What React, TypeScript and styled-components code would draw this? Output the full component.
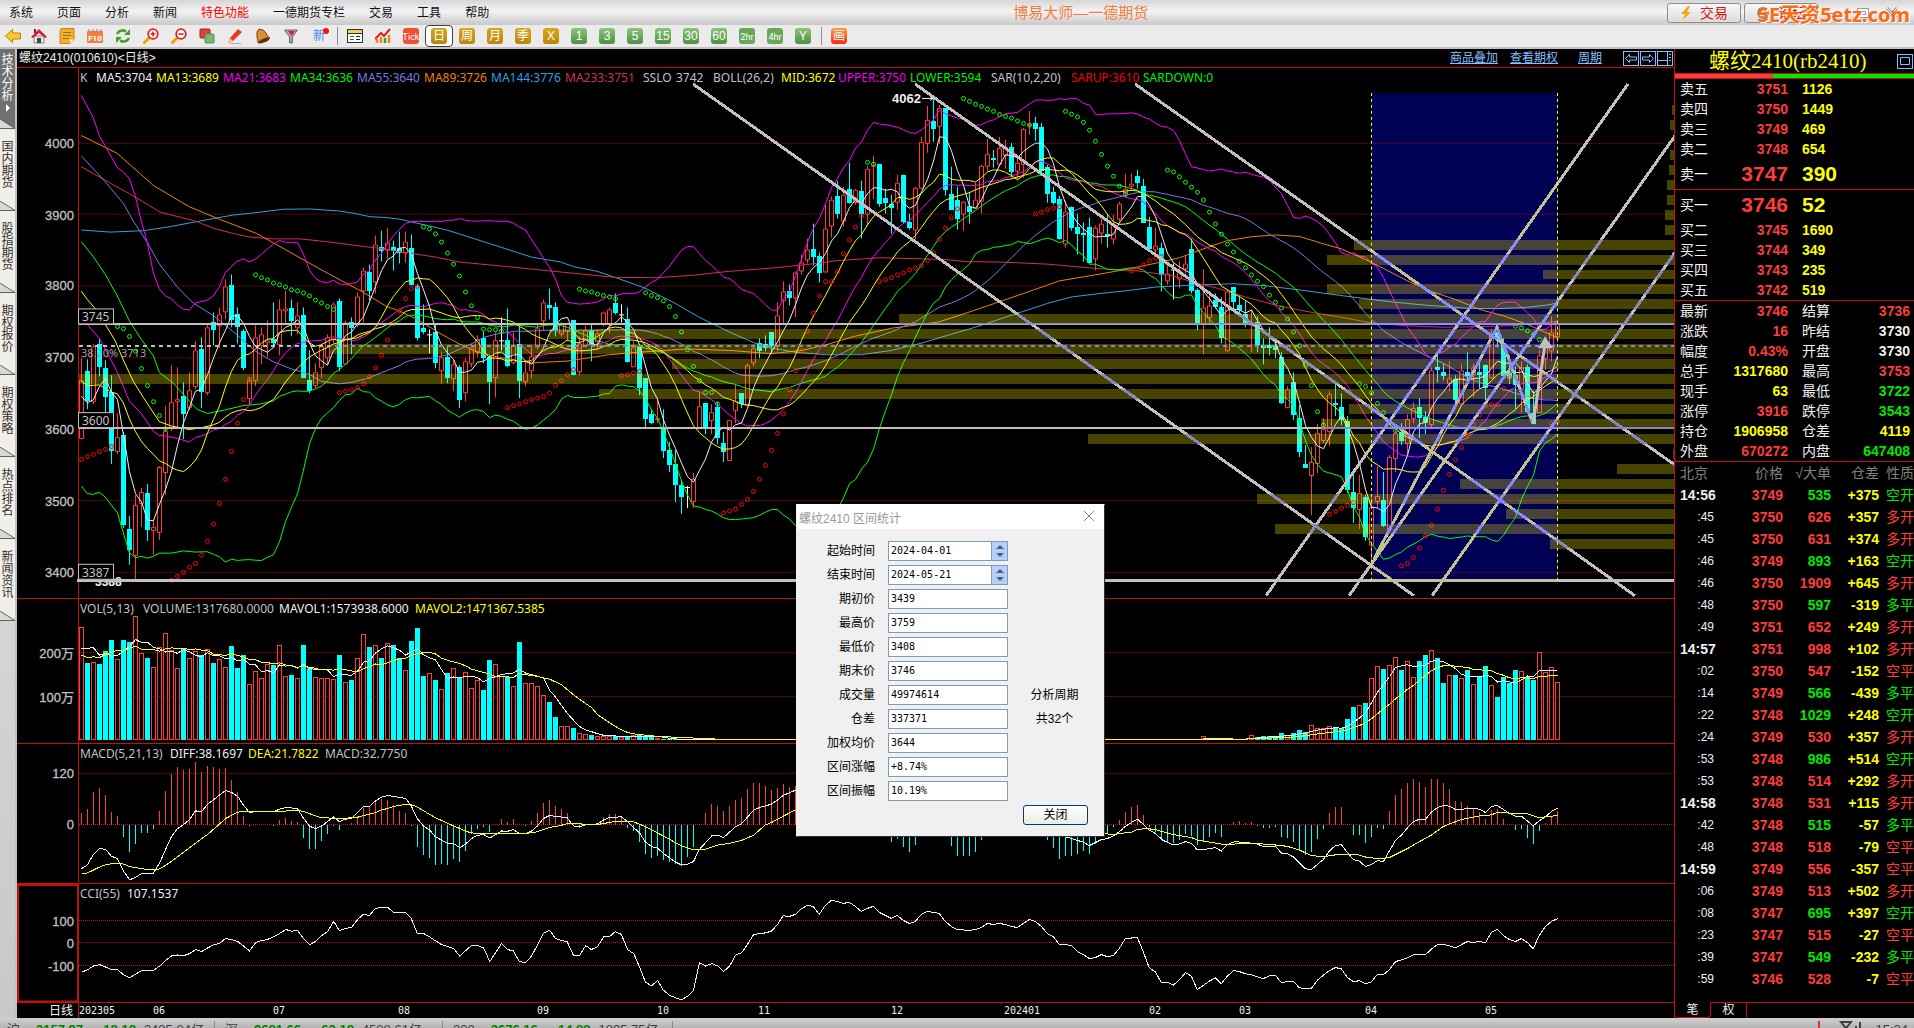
import React from 'react';
import styled, { createGlobalStyle } from 'styled-components';

const CJK = '"Noto Sans CJK SC"';
const UI = `"Liberation Sans", ${CJK}, sans-serif`;
const TAHOMA = `"Noto Sans", ${CJK}, sans-serif`;
const FIXED = `"DejaVu Sans Mono", ${CJK}, monospace`;

const C = {
  line: '#c01010',
  grid: '#900808',
  up: '#ff3c3c',
  down: '#00ffff',
  green: '#00e800',
  yellow: '#ffff00',
  silver: '#c0c0c0',
  white: '#f0f0f0',
  link: '#80c0ff',
};

/* ---------- market data ---------- */

type Candle = { kind: string; high: number; top: number; bottom: number; low: number };
type Window = { x0: number; kx: number; dy: number };
type Point = [number, number];

const W1: Window = { x0: 0, kx: 3, dy: -28 };
const W2: Window = { x0: 400, kx: 2.613, dy: 0 };
const W3: Window = { x0: 1000, kx: 2.306, dy: 0 };

const barX = (i: number) => 81.5 + i * 6;
const priceY = (v: number) => 60 + v / 2.8;

const readCandles = (src: string, dy: number): Candle[] =>
  src.trim().split(/[;\n]+/).map((s) => s.trim()).filter(Boolean).map((s) => {
    const [high, top, bottom, low] = s.slice(1).split(' ').map((n) => Number(n) + dy);
    return { kind: s[0], high, top, bottom, low };
  });

const candles: Candle[] = [
  ...readCandles(`
r865 928 1090 1090;c868 902 985 1008;r826 832 985 993;c810 826 889 915;c870 894 973 1018;c912 960 1125 1162
r1018 1087 1125 1133;c1072 1082 1332 1340;c1308 1345 1402 1445;r1248 1278 1418 1488;r1230 1241 1272 1337
c1217 1243 1346 1377;r1318 1337 1346 1417;r1168 1171 1353 1374;r1000 1070 1185 1248;r885 987 1062 1070
r890 981 986 1060;c932 972 1021 1091;r904 956 1003 1010;r818 842 944 952;c806 840 960 1004;r770 779 959 968
c736 765 786 828;r722 743 774 837;r645 664 734 756;c630 661 759 778;c721 742 777 822;c783 790 892 898
r918 928 976 995;r772 807 928 943;r779 799 828 881;r758 816 820 863;c708 812 822 838;r700 729 827 857
r676 726 730 770;c700 725 762 803;r708 746 779 797;c722 744 920 922;c843 927 958 963;r880 905 942 950
r826 832 891 920;r798 807 862 883;r708 715 812 822;c697 706 889 902;r760 765 880 883;c750 765 781 853
r680 692 770 779;r610 618 676 763;c602 622 677 702;r520 547 649 682;c506 552 563 593;r497 539 561 585
c535 552 562 618;c510 555 568 600`, -28),
  ...readCandles(`
r482 510 540 567;c490 526 633 633;c630 636 780 786;c685 753 763 770;w755 771 771 823;c738 763 850 865
r820 835 872 910;c805 833 892 907;r840 853 893 930;c857 862 954 976;r838 846 933 957;r795 806 852 862
r773 783 818 835;c762 782 836 850;c826 833 903 965;r765 788 891 945;w722 788 789 815;c697 786 859 862
r765 800 848 853;c745 798 901 950;r848 877 901 915;r800 832 872 892;r739 753 803 812;r672 679 730 760
c641 688 696 728;c680 694 759 775;r735 740 766 775;r738 740 760 790;c731 732 884 886;r775 795 874 885
r745 758 802 805;c742 759 800 845;r755 768 790 812;r706 709 738 748;r694 701 740 768;c655 684 711 713
w687 714 714 735;c694 728 848 848;r790 806 860 860;c798 806 920 940;c893 893 1007 1030;c980 993 1020 1022
r950 1006 1009 1020;c980 1032 1097 1117;c1072 1095 1136 1155;c1095 1134 1192 1240;c1178 1192 1225 1273
w1196 1197 1197 1257;r1160 1175 1237 1258;r932 971 1032 1032;c963 963 1032 1050;r965 989 1012 1050
c960 974 1060 1078;c1045 1076 1100 1128;r1012 1012 1124 1126;r910 957 984 1018;c935 936 965 977
r852 858 968 970;r798 810 847 860;c782 795 817 837;c773 799 808 818;c765 765 803 825;r680 718 802 817
r622 650 674 740;c630 650 668 688;r594 595 667 722;r545 569 592 602;r500 531 561 570;c460 529 551 578
c540 549 595 623;r407 472 594 595;r383 391 464 497;c340 381 430 445;r355 378 452 468;c288 360 400 403
r360 365 397 405;c340 368 430 500;r297 306 430 465;r270 293 296 390;c290 292 402 412;c362 386 399 432
c378 404 414 488;r322 343 398 420;c322 322 454 460;c430 454 470 475;r356 357 475 505;r215 230 358 360
r130 168 233 260;c107 170 192 230;r127 133 186 235;c133 133 363 380;c300 375 420 420;c355 393 444 475
r395 398 432 480;c370 409 426 458;r345 392 413 415;r294 297 394 430;r222 264 298 310;c252 275 279 302
r215 245 290 300`, 0),
  ...readCandles(`
r225 243 265 305;c232 243 313 330;r270 289 312 335;r190 194 290 330;r143 180 182 210;c160 176 192 228
c176 188 310 320;c295 300 374 400;c355 370 400 405;c380 388 500 503;r395 425 516 525;c412 412 470 478
c430 468 487 545;c455 484 490 565;c442 468 567 567;r465 470 558 592;r445 460 485 515;c432 486 490 525
r435 458 500 517;r397 404 446 453;r318 362 372 385;r320 348 354 365;c308 325 343 360;c332 353 456 456
c440 467 530 535;r470 522 533 550;c512 525 603 650;r570 600 620 630;w570 588 588 672;r565 590 614 640
r550 572 584 598;c500 529 650 655;c640 647 741 760;r588 694 740 825;r655 690 723 740;c655 674 694 697
c665 694 780 795;r645 650 816 817;c637 637 680 705;c660 690 702 720;c675 713 740 750;r700 735 742 820
c720 735 802 820;c780 802 810 853;c750 800 808 828;c785 803 815 838;c820 835 963 965;r915 925 975 977
c875 905 997 1012;c970 1005 1100 1113;c1080 1134 1144 1145;r1085 1128 1166 1276;r1022 1047 1130 1160
r1005 1035 1068 1075;r930 937 1042 1083;c912 963 969 1000;c935 975 1012 1025;c1000 1014 1208 1215
c1155 1211 1256 1298;r1165 1216 1260 1315;c1222 1225 1337 1350;r1230 1255 1360 1415;r1140 1224 1238 1258
c1155 1235 1308 1310;r1110 1114 1315 1318;r1040 1047 1118 1155;c1020 1043 1070 1080;r995 1008 1076 1110
r960 978 1006 1020;c950 975 1005 1062;c985 1003 1020 1050;r862 872 1022 1030;c825 862 872 905
c850 875 887 900;r845 893 907 930;c885 895 955 970;r855 872 963 965;c820 875 888 910;r852 862 882 945
c850 875 886 920;c855 858 922 955;r755 768 890 892;c752 765 788 805;c780 795 887 890;c830 880 892 910
c860 885 912 980;r845 862 920 990;c855 862 988 990;c930 990 1022 1022;r815 830 987 990;r785 800 838 870
r720 765 815 845;r735 740 775 785`, 0),
];

const closes = candles.map((c) => (c.kind === 'c' ? c.bottom : c.top));

const points = (src: string): Point[] =>
  src.trim().split(/\s+/).map((p) => p.split(',').map(Number) as Point);

const trace = (w: Window, src: string): Point[] =>
  points(src).map(([x, y]) => [w.x0 + x / w.kx, priceY(y + w.dy)]);

const mean = (a: number[]) => a.reduce((s, n) => s + n, 0) / a.length;

const average = (n: number, spread = 0): Point[] =>
  closes.flatMap((_, i): Point[] => {
    if (i < n - 1) return [];
    const part = closes.slice(i - n + 1, i + 1);
    const m = mean(part);
    const sd = Math.sqrt(mean(part.map((v) => (v - m) ** 2)));
    return [[barX(i), priceY(m + spread * sd)]];
  });

const curves: [string, Point[]][] = [
  ['#30a0e0', [
    ...trace(W1, '244,505 330,511 430,507 514,495 600,480 700,463 780,455 850,447 930,446 1020,452 1072,460 1110,468 1160,470'),
    ...trace(W2, '0,447 61,462 125,478 233,515 343,553 420,567 453,580 515,593 562,610 640,640 719,683 782,722 860,763 923,793 970,808 1033,820 1111,827 1206,827 1284,815 1362,795 1440,770 1503,750'),
    ...trace(W3, '0,727 55,705 110,683 165,665 234,655 289,648 360,637 441,632 538,628 607,633 690,645 760,657 857,672 912,680 981,688 1078,697 1147,698 1216,694 1260,688 1286,682'),
  ]],
  ['#d03050', [
    ...trace(W1, '244,328 334,375 410,415 480,455 586,480 640,500 700,515 750,525 820,530 900,530 980,538 1080,550 1140,557'),
    ...trace(W2, '0,538 93,553 155,567 280,580 374,590 468,600 562,610 672,611 767,604 860,593 970,584 1064,574 1143,563 1253,555 1362,558 1425,560 1480,566'),
    ...trace(W3, '0,567 110,573 220,585 317,592 400,606 440,622 500,640 566,665 635,688 704,705 787,722 857,738 940,746 1023,750 1120,748 1190,745 1244,738 1286,733'),
  ]],
  ['#f08000', [
    ...trace(W1, '244,240 352,290 460,380 568,440 658,475 770,515 856,560 970,620 1090,680 1160,720'),
    ...trace(W2, '0,705 45,728 109,770 155,797 202,820 260,835 343,850 437,845 547,827 625,820 750,811 860,815 970,824 1050,815 1111,800 1190,775 1284,753 1409,735 1480,710'),
    ...trace(W3, '0,678 55,655 137,620 234,600 303,585 360,570 414,555 469,530 524,507 580,496 635,491 690,495 746,516 787,530 843,560 884,585 940,620 995,650 1050,672 1106,700 1161,718 1216,742 1286,780'),
  ]],
  ['#7878e8', [
    ...trace(W1, '244,297 316,370 370,430 400,480 442,540 478,600 532,665 580,710 640,745 712,800 766,845 820,875 874,895 928,910 964,930 1018,937 1054,933 1100,922 1160,900 1200,885'),
    ...average(55),
  ]],
  ['#00ff00', [
    ...trace(W1, '244,538 280,580 316,630 352,690 388,760 424,812 460,858 478,905 520,935 568,985 590,1008 622,1020 676,1010 730,998 784,993 820,985'),
    ...average(34),
  ]],
  ['#00ff00', [
    ...trace(W1, '244,1224 262,1245 280,1247 298,1241 316,1255 334,1277 352,1298 370,1355 388,1410 406,1425 424,1421 442,1426 460,1421 478,1412 514,1412 550,1406 586,1409 622,1408 640,1415 658,1422 676,1437'),
    ...average(26, 2),
  ]],
  ['#ff00ff', [
    ...trace(W1, '262,770 300,812 350,900 388,985 424,1020 460,1070 478,1082 496,1083 532,1090 568,1100 586,1088'),
    ...average(21),
  ]],
  ['#ff00ff', [
    ...trace(W1, '244,127 280,190 298,240 316,270 334,300 352,330 370,342 388,360 406,410 424,480 442,540 460,625 478,670 496,690 514,698 532,715 550,727 568,730 586,710 622,702 640,690 658,665 676,625'),
    ...average(26, -2),
  ]],
  ['#ffff00', [
    ...trace(W1, '244,677 262,700 285,725 316,770 345,815 370,870 400,930 430,975 478,1043 514,1055 568,1065 604,1060 640,1052 658,1045 676,1030'),
    ...average(26),
  ]],
  ['#ffff00', [
    ...trace(W1, '244,930 262,942 298,940 334,960 352,965 370,990 388,1035 406,1070 424,1098 442,1118'),
    ...average(13),
  ]],
  ['#f0f0f0', [...trace(W1, '244,972 262,990 280,982 298,945'), ...average(5)]],
];

const sar: [number, string, string][] = [
  [0, 'up', '1121,1113,1107,1099,1093,1085'],
  [6, 'dn', '748,754,776,817,866,914,959,998,1035'],
  [15, 'up', '1460,1449,1438,1424,1413,1390,1351,1303,1245,1177,1099,1020,953,896'],
  [29, 'dn', '603,611,617,626,631,637,645,648,654,662,674,682,692,700'],
  [43, 'up', '934,930,926,920,909,889,864,828,786,740,704,670,642,635'],
  [57, 'dn', '468,474,488,511,542,573,606,651,690,723,755,757,757,761'],
  [71, 'up', '976,970,965,959,954,949,945,935,913,900,883,869'],
  [83, 'dn', '643,648,651,657,661,665,670'],
  [90, 'up', '886,883,878,874'],
  [94, 'dn', '653,661,667,676,692,720,763,813,860,900,933,933,965'],
  [107, 'up', '1272,1266,1261,1247,1233,1211,1177,1138,1096,1048,993,925,872,816,760,710,662,622,622,595,544,505,469,438'],
  [131, 'dn', '287,292'],
  [133, 'up', '622,617,611,603,598,589,584,577,563,540,503,472,443,418'],
  [147, 'dn', '108,116,124,130,138,144,153,158,163,171,178,183'],
  [159, 'up', '432,427,420,416,412'],
  [164, 'dn', '144,152,160,175,197,228,265,298,326,354,377'],
  [175, 'up', '592,586,575,563,557,552'],
  [181, 'dn', '309,314,328,343,357,371,393,427,460,489,517,539,565,583,603,621,636,660,680,696,727,763,802,857,914,987,1025'],
  [208, 'up', '1275,1267,1258,1250,1242'],
  [213, 'dn', '909,916,934,964,990,1018,1040'],
  [220, 'up', '1420,1413,1396,1370,1336,1306,1261,1208,1163,1122,1088,1053,1024,996,970,967,967,922,892'],
  [239, 'dn', '747,752,760,770,785'],
  [245, 'up', '1020,1015'],
];

// left edge of every volume-at-price bar, from the top level down
const profile = [1672, 1670, 1674, 1670, 1669, 1667, 1667, 1665, 1665, 1354, 1327, 1543, 1327, 1359, 899, 549, 330, 672, 79, 599, 1349, 1321, 1088, 1673, 1617, 1460, 1257, 1506, 1275, 1550];

const volTops = (
  '115 222 220 225 186 153 211 153 159 82 193 207 235 175 133 182 238 180 208 187 198 181 222 211 235 171 237 198 286 245 268 226 228 169 262 258 268 168 240 265 268 268 271 198 280 273 208 136 174 169 207 163 168 208 244 156 117 261 253 273 301 252 238 265 250 298 274 303 213 226 262 265 290 159 283 283 290 319 339 384 412 411 417 433 436 438 441 440 440 440 445 443 438 436 441 443 447 '
  + '451 '.repeat(89)
  + '449 442 449 449 449 449 449 449 449 438 444 441 441 444 432 438 432 423 430 408 418 418 412 418 418 390 354 349 342 267 232 240 229 205 243 217 265 216 198 184 208 282 259 258 268 243 286 262 231 289 324 265 282 243 247 265 273 190 250 235 280'
).split(' ').map(Number);

const volAverage = (n: number, head: number[]): Point[] =>
  volTops.map((_, i) => [
    barX(i),
    i < n - 1 ? head[Math.min(i, head.length - 1)] : mean(volTops.slice(i - n + 1, i + 1)),
  ]).map(([x, y]) => [x, 590 + y / 3]);

const macdBars = (
  '672 660 608 597 618 669 682 743 789 765 732 732 720 666 606 555 534 543 540 519 549 531 534 540 537 573 609 680 711 707 707 707 711 692 687 696 699 747 780 780 756 735 711 723 709 702 680 656 652 633 630 633 648 666 672 711 774 797 807 827 825 827 810 818 786 735 720 714 729 708 690 699 690 708 711 696 672 642 633 651 660 672 711 717 708 706 703 684 675 675 684 717 726 760 794 806 800 812 819 825 825 804 774 704 672 645 652 666 651 633 627 600 582 582 591 603 597 585 594 591 '
  + '600 606 612 620 628 636 644 652 660 670 680 690 700 704 715 758 750 774 789 768 730 715 712 720 735 770 801 801 801 789 753 720 700 690 680 684 690 700 708 715 735 753 777 810 801 801 795 786 795 765 745 735 714 693 669 654 648 678 713 728 753 760 762 753 735 741 768 758 744 732 744 708 699 696 702 699 711 717 717 714 744 747 759 786 798 789 750 720 672 654 654 706 738 738 762 744 717 720 666 618 600 582 570 579 594 570 570 582 600 636 639 651 660 669 690 663 660 690 708 723 720 747 765 726 702 684 666'
).split(' ').map(Number);

const low = (x0: number, kx: number, src: string): Point[] =>
  points(src).map(([x, y]) => [x0 + x / kx, 590 + y / 3]);

const diff: Point[] = [
  ...low(0, 1.96, '160,838 171,827 183,795 195,778 207,780 218,800 230,808 242,845 254,871 266,864 277,853 300,852 313,820 336,742 348,718 360,706 372,690 383,665 395,667 407,645 430,618 442,604 454,610 466,622 477,648 489,670 501,667 536,667 548,660 560,655 583,658 595,688 607,711 618,718 630,711 654,683 665,697 677,690 689,688 701,670 712,653 724,652 736,635 748,624 760,619 771,622 795,628 806,650 818,688 830,710 842,722 853,742 877,762 889,763 901,775 912,765 924,748 936,738 948,736 960,746 983,725 995,726 1006,721 1018,733 1030,733 1042,725 1053,711 1065,688 1077,679 1112,686 1124,710 1136,713 1148,706 1171,704 1183,692 1195,684 1218,683 1230,697 1242,715 1254,732 1265,758 1277,772 1289,777 1300,792 1324,818 1336,827 1348,824 1359,817 1371,780 1395,740 1407,738 1418,745 1442,712 1454,703 1465,684 1477,663 1489,655 1512,645 1524,632 1536,618 1558,604'),
  ...low(780, 3, '200,600 500,680 700,690 850,740 890,753 910,758 928,769 946,760 964,751 982,748 1000,740 1027,721'),
  ...low(1100, 2.703, '60,718 85,700 101,690 117,705 133,722 150,733 170,753 198,767 215,764 231,757 247,763 263,781 280,781 312,775 328,785 344,766 365,757 412,762 425,764 441,772 474,770 490,791 506,793 523,803 555,838 571,841 604,810 620,785 636,769 652,766 669,790 685,811 701,815 718,832 734,825 750,814 766,817 782,785 799,753 815,737 831,716 847,697 864,690 880,690 896,668 912,655 928,649 944,651 961,661 1009,658 1025,660 1042,670 1058,652 1074,649 1106,672 1123,681 1139,681 1155,695 1171,710 1187,695 1204,683 1220,667 1238,657'),
];

const dea: Point[] = [
  ...low(0, 1.96, '160,853 171,851 195,833 207,826 230,821 242,824 254,832 283,839 305,842 313,838 325,828 350,800 383,762 407,735 430,705 442,688 466,669 477,667 548,667 583,663 595,667 630,686 677,687 701,684 724,675 736,670 748,662 760,658 771,652 795,646 806,646 818,654 853,685 877,702 889,710 912,725 924,731 971,733 1042,731 1054,727 1077,715 1101,708 1112,703 1171,706 1206,697 1242,698 1265,712 1300,740 1336,770 1359,781 1371,781 1383,779 1407,767 1430,762 1454,753 1477,738 1500,707 1512,700 1536,680 1558,663'),
  ...low(1100, 2.703, '10,733 36,736 52,733 85,729 101,721 125,718 150,721 165,726 198,736 247,745 263,752 300,759 344,767 365,764 440,764 474,767 506,771 539,782 571,799 604,802 652,794 701,797 718,803 750,808 782,805 831,778 847,767 896,737 928,712 944,704 977,691 1025,680 1058,677 1074,670 1155,674 1187,685 1238,679'),
];

const cci: Point[] = [
  ...low(0, 1.96, '160,1145 171,1139 183,1127 195,1123 207,1130 218,1138 230,1138 242,1153 254,1162 277,1141 300,1141 313,1127 325,1110 336,1097 348,1094 360,1096 372,1090 383,1078 395,1084 407,1073 419,1063 430,1060 442,1045 454,1048 466,1054 477,1067 489,1082 501,1057 513,1051 524,1048 536,1040 548,1030 560,1018 571,1023 583,1021 595,1045 607,1063 618,1054 630,1037 642,1024 654,994 665,1021 677,1015 689,1012 701,988 712,973 724,976 736,955 748,952 760,952 771,967 795,967 806,985 818,1030 830,1030 842,1040 865,1063 889,1075 901,1097 924,1066 936,1066 948,1073 960,1114 983,1060 995,1078 1006,1082 1018,1114 1030,1117 1042,1097 1053,1066 1065,1030 1077,1020 1089,1045 1101,1051 1112,1055 1124,1096 1136,1096 1148,1066 1159,1078 1171,1070 1183,1040 1195,1039 1206,1024 1218,1033 1230,1078 1242,1090 1254,1132 1265,1175 1277,1186 1289,1171 1300,1199 1312,1214 1324,1222 1336,1228 1348,1217 1359,1200 1371,1117 1383,1127 1395,1120 1407,1127 1418,1144 1430,1127 1442,1094 1454,1087 1465,1063 1477,1033 1500,1028 1512,1023 1524,1003'),
  ...low(780, 3, '0,991 10,977 28,979 46,973 64,956 82,946 100,949 118,973 136,946 154,931 172,934 190,940 208,937 226,949 244,964 262,955 280,949 298,967 316,976 334,985 352,976 370,991 388,1000 406,994 424,973 442,964 478,970 496,994 514,1009 532,1018 568,1021 586,1018 604,1012 622,1000 640,1003 658,1000 676,1003 694,1009 712,1012 730,1000 748,988 766,994 784,1009 802,1030 820,1039 838,1063 856,1063 874,1066 892,1084 910,1093 928,1105 946,1102 964,1093 982,1099 1000,1096 1018,1075 1036,1045 1072,1042'),
  ...low(1100, 2.703, '101,1042 117,1085 133,1132 150,1145 166,1177 182,1175 198,1184 215,1168 231,1147 247,1157 263,1198 280,1184 296,1172 312,1162 328,1180 344,1157 361,1141 377,1144 393,1150 409,1153 441,1165 458,1156 474,1154 490,1177 506,1174 523,1174 539,1192 555,1195 571,1195 588,1169 604,1154 620,1141 636,1132 652,1135 669,1162 685,1174 701,1171 718,1180 734,1174 750,1151 766,1153 782,1138 799,1114 831,1103 847,1093 880,1093 896,1076 912,1063 928,1063 944,1066 961,1073 977,1063 993,1054 1009,1057 1025,1054 1042,1057 1058,1027 1074,1018 1090,1036 1106,1048 1123,1054 1139,1045 1155,1057 1171,1075 1187,1037 1204,1009 1220,994 1238,985'),
];

const asPath = (p: Point[]) => p.map(([x, y]) => `${x.toFixed(1)},${y.toFixed(1)}`).join(' ');

/* ---------- page frame ---------- */

const GlobalStyle = createGlobalStyle`
  * { box-sizing: border-box; }
  body { margin: 0; background: #c8c8c8; overflow: hidden; font-family: ${UI}; }
  button, input { font: inherit; margin: 0; padding: 0; border: 0; border-radius: 0; background: none; color: inherit; }
  table { border-collapse: collapse; border-spacing: 0; }
  td, th { padding: 0; font-weight: normal; text-align: left; }
`;

const Screen = styled.div`
  position: relative;
  display: flex;
  flex-direction: column;
  height: 100vh;
  overflow: hidden;
`;

const MenuBar = styled.nav`
  position: relative;
  display: flex;
  align-items: center;
  flex: none;
  height: 25px;
  padding-left: 9px;
  gap: 24px;
  background: linear-gradient(#d6d6d6, #f4f4f4 45%, #e4e4e4 65%, #c8c8c8);
  font-size: 12px;
  line-height: 24px;
`;

const MenuItem = styled.button<{ $hot?: boolean }>`
  color: ${(p) => (p.$hot ? '#ff0000' : '#101010')};
  white-space: nowrap;
`;

const Title = styled.h1`
  flex: 1;
  margin: 0 0 0 500px;
  color: #f47b3c;
  font-size: 15px;
  font-weight: normal;
`;

const TopButtons = styled.div`
  display: flex;
  align-items: center;
  gap: 3px;
  padding-right: 9px;
`;

const TradeButton = styled.button`
  display: flex;
  align-items: center;
  justify-content: center;
  gap: 8px;
  width: 74px;
  height: 20px;
  border: 1px solid #8c8c8c;
  border-radius: 3px;
  background: linear-gradient(#f8f8f8, #dcdcdc);
  color: #dc1414;
  font-size: 14px;
  line-height: 18px;
`;

const WindowButton = styled.button`
  width: 26px;
  height: 20px;
  color: #909090;
  svg { display: block; margin: auto; }
`;

const Watermark = styled.strong`
  position: absolute;
  top: 2px;
  right: 4px;
  color: #ff6a10;
  font-family: ${TAHOMA};
  font-size: 20px;
  line-height: 26px;
  text-shadow: 1px 1px 0 #fff;
  white-space: nowrap;
`;

const ToolBar = styled.div`
  display: flex;
  align-items: center;
  flex: none;
  height: 24px;
  background: #ebebeb;
  border-bottom: 2px solid #c8c0c0;
`;

const Tool = styled.button<{ $on?: boolean }>`
  display: flex;
  align-items: center;
  justify-content: center;
  flex: none;
  width: 28px;
  height: 22px;
  border: ${(p) => (p.$on ? '1px solid #404040' : '0')};
  border-radius: 4px;
  background: ${(p) => (p.$on ? '#fff' : 'transparent')};
  &:first-child { width: 25px; }
`;

const Chip = styled.span<{ $c: string }>`
  display: block;
  width: 16px;
  height: 16px;
  border-radius: 3px;
  background: ${(p) => p.$c};
  color: #fff;
  font-size: 12px;
  line-height: 16px;
  text-align: center;
  white-space: nowrap;
`;

const NewTag = styled.span`
  position: relative;
  color: #3c8cf0;
  font-size: 12px;
  line-height: 16px;
  &::after {
    content: '';
    position: absolute;
    top: 0;
    right: -4px;
    width: 6px;
    height: 6px;
    border-radius: 50%;
    background: #ff1010;
  }
`;

const Divider = styled.span`
  flex: none;
  width: 1px;
  height: 18px;
  margin: 0 3px 0 4px;
  background: #909090;
`;

const Body = styled.div`
  display: flex;
  flex: 1;
  min-height: 0;
`;

const SideTabs = styled.nav`
  display: flex;
  flex-direction: column;
  flex: none;
  width: 17px;
  background: linear-gradient(#e8e8e8, #c8c8c8);
  border-right: 2px solid #c8c0c0;
`;

const SideTab = styled.button<{ $on?: boolean }>`
  display: flex;
  flex-direction: column;
  align-items: center;
  justify-content: center;
  position: relative;
  height: ${(p) => (p.$on ? 80 : 82)}px;
  padding-bottom: 10px;
  background: ${(p) => (p.$on ? '#707070' : '#f0efe8')};
  color: ${(p) => (p.$on ? '#fff' : '#303030')};
  font-size: 12px;
  line-height: 12px;
`;

const Slant = styled.svg`
  position: absolute;
  left: 0;
  bottom: 0;
`;

const Charts = styled.main`
  display: flex;
  flex-direction: column;
  flex: 1;
  min-width: 0;
  background: #000;
`;

const ChartHead = styled.header`
  display: flex;
  align-items: center;
  flex: none;
  height: 19px;
  padding-left: 2px;
  border-bottom: 1px solid ${C.line};
  color: ${C.white};
  font-size: 12px;
  line-height: 18px;
`;

const Instrument = styled.h2`
  flex: 1;
  margin: 0;
  font-size: 12px;
  font-weight: normal;
`;

const HeadLink = styled.a`
  margin-right: 12px;
  color: ${C.link};
  text-decoration: underline;
  & + & + & { margin: 0 21px 0 8px; }
`;

const HeadButton = styled.button`
  width: 16px;
  height: 15px;
  margin-right: 1px;
  border: 1px solid ${C.link};
  svg { display: block; }
`;

const Panel = styled.section<{ $grow: number }>`
  position: relative;
  flex: ${(p) => p.$grow} 1 0;
  min-height: 0;
  border-bottom: 1px solid ${C.line};
  svg { display: block; width: 100%; height: 100%; }
`;

const Legend = styled.div<{ $cols: string }>`
  position: absolute;
  top: 1px;
  left: 63px;
  display: grid;
  grid-template-columns: ${(p) => p.$cols};
  font-family: ${TAHOMA};
  font-size: 12px;
  line-height: 18px;
  white-space: nowrap;
`;

const Entry = styled.span<{ $c: string }>`
  color: ${(p) => p.$c};
`;

const DateAxis = styled.div`
  flex: none;
  height: 15px;
  svg { display: block; width: 100%; height: 100%; }
`;

/* ---------- quote panel ---------- */

const Quotes = styled.aside`
  display: flex;
  flex-direction: column;
  flex: none;
  width: 240px;
  overflow: hidden;
  background: #000;
  border-left: 1px solid ${C.line};
  color: ${C.white};
  font-size: 14px;
`;

const QuoteHead = styled.header`
  display: flex;
  align-items: center;
  flex: none;
  height: 24px;
  padding-left: 34px;
`;

const QuoteName = styled.h2`
  flex: 1;
  margin: 0;
  color: ${C.yellow};
  font-family: "Liberation Serif", ${CJK}, serif;
  font-size: 21px;
  font-weight: normal;
  line-height: 24px;
  white-space: nowrap;
`;

const Balance = styled.div`
  display: flex;
  flex: none;
  height: 6px;
  border-top: 1px solid ${C.line};
  border-bottom: 1px solid ${C.line};
  background: ${C.green};
  &::before { content: ''; width: 98px; background: ${C.up}; }
`;

const QuoteTable = styled.table`
  flex: none;
  width: 100%;
  table-layout: fixed;
  border-bottom: 1px solid ${C.line};
  border-collapse: separate;
`;

const QRow = styled.tr<{ $big?: boolean }>`
  height: ${(p) => (p.$big ? 30 : 20)}px;
  line-height: ${(p) => (p.$big ? 30 : 20)}px;
`;

const QLabel = styled.th<{ $second?: boolean }>`
  width: ${(p) => (p.$second ? 51 : 43)}px;
  padding-left: ${(p) => (p.$second ? 14 : 5)}px;
`;

const QNum = styled.td<{ $c: string; $big?: boolean; $left?: boolean; $last?: boolean }>`
  width: ${(p) => (p.$left || p.$last ? 'auto' : '70px')};
  padding-left: ${(p) => (p.$left ? 14 : 0)}px;
  padding-right: ${(p) => (p.$last ? 4 : 0)}px;
  color: ${(p) => p.$c};
  font-size: ${(p) => (p.$big ? 21 : 14)}px;
  font-weight: bold;
  text-align: ${(p) => (p.$left ? 'left' : 'right')};
  white-space: nowrap;
`;

const TickTable = styled.table`
  flex: none;
  width: 239px;
  table-layout: fixed;
  tr { height: 22px; line-height: 22px; }
`;

const TickHead = styled.th<{ $w: number }>`
  width: ${(p) => p.$w}px;
  color: #808080;
  text-align: right;
  white-space: nowrap;
  &:first-child { padding-left: 5px; text-align: left; }
`;

const TickTime = styled.td<{ $full: boolean }>`
  padding-right: ${(p) => (p.$full ? 0 : 2)}px;
  padding-left: ${(p) => (p.$full ? 5 : 0)}px;
  text-align: ${(p) => (p.$full ? 'left' : 'right')};
  font-size: ${(p) => (p.$full ? 14 : 12)}px;
  font-weight: ${(p) => (p.$full ? 'bold' : 'normal')};
`;

const TickNum = styled.td<{ $c: string; $plain?: boolean }>`
  color: ${(p) => p.$c};
  font-weight: ${(p) => (p.$plain ? 'normal' : 'bold')};
  text-align: right;
  white-space: nowrap;
`;

const QuoteTabs = styled.div`
  display: flex;
  flex: none;
  height: 16px;
  margin-top: auto;
`;

const QuoteTab = styled.button<{ $on?: boolean }>`
  width: 36px;
  border: 1px solid ${C.line};
  border-left: 0;
  border-top-color: ${(p) => (p.$on ? 'transparent' : C.line)};
  border-bottom-color: ${(p) => (p.$on ? C.line : 'transparent')};
  border-radius: ${(p) => (p.$on ? '0 0 4px 4px' : '0')};
  font-size: 12px;
  line-height: 14px;
`;

const TabRule = styled.span`
  flex: 1;
  border-top: 1px solid ${C.line};
`;

const StatusBar = styled.footer`
  display: flex;
  flex: none;
  height: 10px;
  padding: 3px 6px 0 7px;
  gap: 10px;
  overflow: hidden;
  background: linear-gradient(#d0d0d0, #b4b4b4);
  color: #404040;
  font-size: 13px;
  line-height: 18px;
  white-space: nowrap;
`;

const Index = styled.span<{ $w: number }>`
  display: flex;
  width: ${(p) => p.$w}px;
  gap: 8px;
  border-right: 1px solid #888;
  b { color: #008000; margin-left: 8px; }
`;

const Clock = styled.span`
  display: flex;
  gap: 8px;
  margin-left: auto;
`;

/* ---------- statistics window ---------- */

const Dialog = styled.form`
  position: absolute;
  top: 504px;
  left: 796px;
  width: 309px;
  height: 333px;
  background: #f0f0f0;
  border: 1px solid #303030;
  border-top-color: #fff;
  border-left-color: #f0f0f0;
  color: #000;
  font-size: 12px;
`;

const DialogTitle = styled.header`
  display: flex;
  align-items: center;
  justify-content: space-between;
  height: 24px;
  padding: 0 9px 0 2px;
  background: #fff;
  color: #999;
`;

const Fields = styled.div`
  display: grid;
  grid-template-columns: 78px 120px 1fr;
  column-gap: 13px;
  row-gap: 4px;
  margin-top: 12px;
  line-height: 20px;
`;

const FieldLabel = styled.label`
  grid-column: 1;
  text-align: right;
`;

const FieldBox = styled.span`
  grid-column: 2;
  display: flex;
  height: 20px;
  border: 1px solid #7f9db9;
  background: #fff;
`;

const FieldInput = styled.input`
  flex: 1;
  min-width: 0;
  padding-left: 2px;
  padding-bottom: 1px;
  font-family: ${FIXED};
  font-size: 10px;
`;

const Spin = styled.button`
  width: 16px;
  background: #b8d0f8;
  border-left: 1px solid #7f9db9;
  svg { display: block; margin: auto; }
`;

const Note = styled.output`
  grid-column: 3;
  padding-right: 16px;
  text-align: center;
`;

const CloseButton = styled.button`
  display: block;
  width: 65px;
  height: 20px;
  margin: 4px 0 0 226px;
  border: 1px solid #003c74;
  border-radius: 3px;
  background: linear-gradient(#fff, #ecebe5);
  line-height: 18px;
`;

/* ---------- icons ---------- */

const Glyph = ({ children }: { children: React.ReactNode }) => (
  <svg width="16" height="16" viewBox="0 0 16 16" aria-hidden="true">{children}</svg>
);

const gold = 'linear-gradient(#d8a820, #b88408)';
const leaf = 'linear-gradient(#8cc47c, #4c9040)';
const fire = 'linear-gradient(#ff9c40, #f02c18)';

type ToolItem = { name: string; icon: React.ReactNode; on?: boolean; split?: boolean };

const chip = (name: string, c: string, on = false, split = false): ToolItem => ({
  name, on, split, icon: <Chip $c={c}>{name}</Chip>,
});

const lens = (plus: boolean) => (
  <Glyph>
    <path d="M1.5 14.5L7 9" stroke="#f0a000" strokeWidth="3" strokeLinecap="round" />
    <circle cx="10" cy="6" r="4.8" fill="#fff" stroke="#e02020" strokeWidth="1.8" />
    <path d={plus ? 'M7.5 6h5M10 3.5v5' : 'M7.5 6h5'} stroke="#e02020" strokeWidth="1.6" />
  </Glyph>
);

const badge = (name: string, fill: string): ToolItem => ({
  name,
  icon: (
    <Glyph>
      <rect width="16" height="16" rx="3" fill={fill} />
      <text x="8" y="12" fill="#fff" fontSize="9" textAnchor="middle" fontFamily="Roboto">{name}</text>
    </Glyph>
  ),
});

const tools: ToolItem[] = [
  { name: '后退', icon: <Glyph><path d="M.5 8L7.500 1.500V5H15.500V11H7.500V14.500Z" fill="#ffc828" stroke="#b88408" /></Glyph> },
  { name: '首页', icon: <Glyph><path d="M3 8h10v7H3z" fill="#e8e8e8" stroke="#888" /><path d="M0 9L8 1l8 8-2 1-6-5-6 5z" fill="#d02030" /><path d="M3 1h2v4H3z" fill="#a01020" /><path d="M6 10h4v5H6z" fill="#404848" /></Glyph> },
  { name: '公告', icon: <Glyph><path d="M2 .5h13v11l-4 4H1v-12z" fill="#f0b030" stroke="#c88410" /><path d="M4 4.500h8M4 7.500h8M3.500 10.500h6" stroke="#a86800" /><path d="M11 15.500v-4h4z" fill="#fff0b0" /></Glyph> },
  { name: 'F10', icon: <Glyph><rect x="0" y="3" width="16" height="12" rx="1" fill="#f08040" /><path d="M2 1v3M6 1v3M10 1v3M14 1v3" stroke="#888" /><text x="8" y="13" fill="#fff" fontSize="8" fontWeight="bold" textAnchor="middle" fontFamily="Roboto">F10</text></Glyph> },
  { name: '刷新', icon: <Glyph><path d="M2 6q2-4 7-3.500l2 1M14 10q-2 4-7 3.500l-2-1" fill="none" stroke="#40a020" strokeWidth="2.600" /><path d="M15 1v6H9zM1 15V9h6z" fill="#40a020" /></Glyph> },
  { name: '放大', icon: lens(true) },
  { name: '缩小', icon: lens(false) },
  { name: '叠加', icon: <Glyph><rect x="1" y="1" width="10" height="9" rx="1" fill="#e04038" stroke="#a02020" /><rect x="6" y="6" width="9" height="9" rx="1" fill="#78b870" stroke="#509050" /></Glyph> },
  { name: '画线', icon: <Glyph><path d="M1 15l2-5 8-9 4 3-9 9z" fill="#e83820" /><path d="M1 15l2-5 3 3z" fill="#f8c890" /><path d="M3 15.500h11" stroke="#aaa" /></Glyph> },
  { name: '预警', icon: <Glyph><path d="M4 1q5 0 7 4 1 4 4 5L3 15q0-3-1-6-1-6 2-8z" fill="#d89030" stroke="#804010" /><ellipse cx="9" cy="12.500" rx="6" ry="2" transform="rotate(-22 9 12.500)" fill="#603010" /></Glyph> },
  { name: '选股', icon: <Glyph><path d="M1.500 2h13L9.500 9v6h-3V9z" fill="#a0a8a8" stroke="#707070" /><path d="M5 3h7L8.500 8z" fill="#e02030" /></Glyph> },
  { name: '新', icon: <NewTag>新</NewTag>, split: true },
  { name: '报价', icon: <Glyph><rect x=".5" y="1.500" width="15" height="13" fill="#fff" stroke="#303030" /><path d="M1 2h14v3H1z" fill="#f0d060" /><path d="M1 5.500h14" stroke="#303030" /><path d="M3 8.500h4M3 11.500h4" stroke="#109010" /><path d="M9 8.500h4M9 11.500h4" stroke="#1010a0" /></Glyph> },
  { name: '走势', icon: <Glyph><path d="M2 11v4M6 9v6" stroke="#f08020" strokeWidth="2.500" /><path d="M10 10v5" stroke="#30a030" strokeWidth="2.500" /><path d="M14 7v8" stroke="#f08020" strokeWidth="2.500" /><path d="M0 11L6 5l3 3 6-7" fill="none" stroke="#e02020" strokeWidth="2" /></Glyph> },
  badge('Tick', '#f05030'),
  chip('日', gold, true), chip('周', gold), chip('月', gold), chip('季', gold), chip('X', gold),
  chip('1', leaf), chip('3', leaf), chip('5', leaf), chip('15', leaf), chip('30', leaf), chip('60', leaf),
  badge('2hr', '#68a858'), badge('4hr', '#68a858'),
  chip('Y', leaf, false, true), chip('画', fire),
];

/* ---------- chart drawings ---------- */

const AxisLabel = ({ y, children }: { y: number; children: React.ReactNode }) => (
  <text x="74" y={y + 5} fill={C.silver} stroke={C.silver} strokeWidth="0.3" fontSize="13" textAnchor="end" fontFamily={UI}>{children}</text>
);

const Grid = ({ ys, color = C.grid }: { ys: number[]; color?: string }) => (
  <g stroke={color} strokeDasharray="1 1" shapeRendering="crispEdges">
    {ys.map((y) => <path key={y} d={`M79 ${y}.5H1674`} />)}
  </g>
);

const trendLines = [
  'M693 84L1414 597', 'M915 84L1635 597', 'M1135 84L1675 466',
  'M1266 597L1628 84', 'M1349 597L1675 136', 'M1432 597L1675 253',
  'M1374 560L1497 328L1533 425',
];

const Drawings = ({ color }: { color: string }) => (
  <g stroke={color} fill="none" shapeRendering="crispEdges">
    {trendLines.map((d) => <path key={d} d={d} strokeWidth="3" />)}
    <path d="M79 325H1674M79 429H1674" strokeWidth="2" />
    <path d="M77 581.5H1674" strokeWidth="3" />
    <path d="M79 347H1674" strokeWidth="2" strokeDasharray="4 4" />
  </g>
);

const PriceTag = ({ y, children }: { y: number; children: React.ReactNode }) => (
  <g>
    <rect x="78.5" y={y + 0.5} width="35" height="15" fill="#000" stroke={C.silver} />
    <text x="82" y={y + 13} fill={C.silver} fontSize="12" fontFamily={TAHOMA}>{children}</text>
  </g>
);

const PriceChart = () => (
  <svg viewBox="17 68 1657 531" preserveAspectRatio="none" role="img" aria-label="日线">
    <defs>
      <clipPath id="profile">
        {profile.map((x, i) => <rect key={i} x={x} y={105 + i * 15} width={1674 - x} height="10" />)}
      </clipPath>
      <clipPath id="range"><rect x="1372" y="93" width="186" height="491" /></clipPath>
    </defs>
    <rect x="1372" y="93" width="186" height="491" fill="#000054" />
    <Grid ys={[143, 214, 286, 358, 429, 501, 573]} />
    <path d="M78.5 68V599" stroke={C.line} />
    {[4000, 3900, 3800, 3700, 3600, 3500, 3400].map((p, i) => (
      <AxisLabel key={p} y={143 + Math.round(i * 71.7)}>{p}</AxisLabel>
    ))}
    <text x="95" y="587" fill={C.white} fontSize="12" fontWeight="bold" fontFamily={UI}>3388</text>
    <path d="M124 581.5h10" stroke={C.white} />
    <g shapeRendering="crispEdges">
      {candles.map((c, i) => {
        const x = barX(i);
        const top = Math.round(priceY(c.top));
        const h = Math.round(priceY(c.bottom)) - top;
        const hi = Math.round(priceY(c.high));
        const lo = Math.round(priceY(c.low));
        if (c.kind === 'c') {
          return (
            <g key={i}>
              <path d={`M${x} ${hi}V${lo}`} stroke={C.down} />
              <rect x={x - 2.5} y={top} width="5" height={Math.max(h, 2)} fill={C.down} />
            </g>
          );
        }
        if (c.kind === 'w') {
          return <path key={i} d={`M${x} ${hi}V${lo}M${x - 2.5} ${top + 0.5}h5`} stroke="#fff" />;
        }
        return (
          <path
            key={i}
            d={`M${x} ${hi}V${top}M${x} ${top + h}V${lo}M${x - 2} ${top + 0.5}h4v${Math.max(h, 1)}h-4z`}
            stroke={C.up}
            fill="none"
          />
        );
      })}
    </g>
    <g fill="none" shapeRendering="crispEdges">
      {curves.map(([color, p], i) => <polyline key={i} points={asPath(p)} stroke={color} />)}
    </g>
    <g fill="none">
      {sar.map(([start, dir, src]) => src.split(',').map((v, k) => (
        <circle
          key={`${start}-${k}`}
          cx={barX(start + k)}
          cy={priceY(Number(v))}
          r="2"
          stroke={dir === 'up' ? '#ff0000' : '#00ff00'}
        />
      )))}
    </g>
    <g fill="rgba(255,240,0,0.28)" shapeRendering="crispEdges">
      {profile.map((x, i) => <rect key={i} x={x} y={105 + i * 15} width={1674 - x} height="10" />)}
    </g>
    <Drawings color={C.silver} />
    <g clipPath="url(#range)"><Drawings color="#c0c090" /></g>
    <g clipPath="url(#profile)">
      <Drawings color="#8888c0" />
      <g clipPath="url(#range)"><Drawings color="#8888ff" /></g>
    </g>
    <path d="M1538 349L1545 337L1553 349Z" fill={C.silver} />
    <path d="M1533 425L1545 345" stroke={C.silver} strokeWidth="3" />
    <path d="M1371.5 93V584M1557.5 93V584" stroke={C.yellow} strokeDasharray="3 3" shapeRendering="crispEdges" />
    <PriceTag y={309}>3745</PriceTag>
    <PriceTag y={413}>3600</PriceTag>
    <PriceTag y={565}>3387</PriceTag>
    <text x="81" y="358" fill="#a0a0a0" fontSize="11" fontFamily={TAHOMA}>38.20% 3713</text>
    <text x="892" y="103" fill={C.white} fontSize="13" fontWeight="bold" fontFamily={UI}>4062</text>
    <path d="M922 98.5h11m-3-2l3 2l-3 2" stroke={C.white} fill="none" />
  </svg>
);

const VolumeChart = () => (
  <svg viewBox="17 600 1657 144" preserveAspectRatio="none" role="img" aria-label="VOL">
    <Grid ys={[653, 697]} />
    <path d="M78.5 600V744" stroke={C.line} />
    <AxisLabel y={654}>200万</AxisLabel>
    <AxisLabel y={698}>100万</AxisLabel>
    <g shapeRendering="crispEdges">
      {volTops.map((v, i) => {
        const y = Math.round(590 + v / 3);
        return candles[i].kind === 'c'
          ? <rect key={i} x={barX(i) - 2.5} y={y} width="5" height={741 - y} fill={C.down} />
          : <rect key={i} x={barX(i) - 2} y={y + 0.5} width="4" height={740 - y} fill="none" stroke={C.up} />;
      })}
    </g>
    <g fill="none" shapeRendering="crispEdges">
      <polyline points={asPath(volAverage(5, [178, 177, 176, 198]))} stroke="#f0f0f0" />
      <polyline points={asPath(volAverage(13, [198, 205, 203, 205, 196, 188, 184, 187, 177, 172, 180, 182]))} stroke={C.yellow} />
    </g>
  </svg>
);

const MacdChart = () => (
  <svg viewBox="17 745 1657 138" preserveAspectRatio="none" role="img" aria-label="MACD">
    <Grid ys={[774]} />
    <Grid ys={[825]} color="#c80c0c" />
    <path d="M78.5 745V883" stroke={C.line} />
    <AxisLabel y={774}>120</AxisLabel>
    <AxisLabel y={825}>0</AxisLabel>
    <g shapeRendering="crispEdges">
      {macdBars.map((v, i) => (
        <path key={i} d={`M${barX(i)} 825.500V${Math.round(590 + v / 3)}`} stroke={v < 707 ? C.up : C.down} />
      ))}
    </g>
    <g fill="none" shapeRendering="crispEdges">
      <polyline points={asPath(diff)} stroke="#f0f0f0" />
      <polyline points={asPath(dea)} stroke={C.yellow} />
    </g>
  </svg>
);

const CciChart = () => (
  <svg viewBox="17 884 1657 118" preserveAspectRatio="none" role="img" aria-label="CCI">
    <Grid ys={[920, 942, 965]} color="#c80c0c" />
    <rect x="18" y="885" width="60" height="116" fill="none" stroke={C.line} strokeWidth="2" />
    <AxisLabel y={921}>100</AxisLabel>
    <AxisLabel y={943}>0</AxisLabel>
    <AxisLabel y={966}>-100</AxisLabel>
    <polyline points={asPath(cci)} stroke="#f0f0f0" fill="none" shapeRendering="crispEdges" />
  </svg>
);

const months: [number, string][] = [
  [79, '202305'], [153, '06'], [273, '07'], [398, '08'], [537, '09'], [657, '10'], [758, '11'],
  [891, '12'], [1004, '202401'], [1149, '02'], [1239, '03'], [1365, '04'], [1485, '05'],
];

/* ---------- quotes ---------- */

const asks: [string, string, string][] = [
  ['卖五', '3751', '1126'], ['卖四', '3750', '1449'], ['卖三', '3749', '469'], ['卖二', '3748', '654'], ['卖一', '3747', '390'],
];
const bids: [string, string, string][] = [
  ['买一', '3746', '52'], ['买二', '3745', '1690'], ['买三', '3744', '349'], ['买四', '3743', '235'], ['买五', '3742', '519'],
];

const R = C.up;
const G = C.green;
const Y = C.yellow;
const stats: [string, string, string, string, string, string][] = [
  ['最新', '3746', R, '结算', '3736', R],
  ['涨跌', '16', R, '昨结', '3730', C.white],
  ['幅度', '0.43%', R, '开盘', '3730', C.white],
  ['总手', '1317680', Y, '最高', '3753', R],
  ['现手', '63', Y, '最低', '3722', G],
  ['涨停', '3916', R, '跌停', '3543', G],
  ['持仓', '1906958', Y, '仓差', '4119', Y],
  ['外盘', '670272', R, '内盘', '647408', G],
];

const ticks = `14:56 3749 535 +375 空开 g
:45 3750 626 +357 多开 r
:45 3750 631 +374 多开 r
:46 3749 893 +163 空开 g
:46 3750 1909 +645 多开 r
:48 3750 597 -319 多平 g
:49 3751 652 +249 多开 r
14:57 3751 998 +102 多开 r
:02 3750 547 -152 空平 r
:14 3749 566 -439 多平 g
:22 3748 1029 +248 空开 g
:24 3749 530 +357 多开 r
:53 3748 986 +514 空开 g
:53 3748 514 +292 多开 r
14:58 3748 531 +115 多开 r
:42 3748 515 -57 多平 g
:48 3748 518 -79 空平 r
14:59 3749 556 -357 空平 r
:06 3749 513 +502 多开 r
:08 3747 695 +397 空开 g
:23 3747 515 -27 空平 r
:39 3747 549 -232 多平 g
:59 3746 528 -7 空平 r`.split('\n').map((s) => s.split(' '));

const Depth = ({ rows }: { rows: [string, string, string][] }) => (
  <QuoteTable>
    <tbody>
      {rows.map(([label, price, lots]) => {
        const big = label[1] === '一';
        return (
          <QRow key={label} $big={big}>
            <QLabel scope="row">{label}</QLabel>
            <QNum $c={R} $big={big}>{price}</QNum>
            <QNum $c={Y} $big={big} $left>{lots}</QNum>
          </QRow>
        );
      })}
    </tbody>
  </QuoteTable>
);

const fields: [string, string, string?][] = [
  ['起始时间', '2024-04-01'], ['结束时间', '2024-05-21'], ['期初价', '3439'], ['最高价', '3759'],
  ['最低价', '3408'], ['期末价', '3746'], ['成交量', '49974614', '分析周期'], ['仓差', '337371', '共32个'],
  ['加权均价', '3644'], ['区间涨幅', '+8.74%'], ['区间振幅', '10.19%'],
];

const RangeDialog = () => (
  <Dialog role="dialog" aria-label="区间统计">
    <DialogTitle>
      <span>螺纹2410 区间统计</span>
      <button type="button" aria-label="关闭窗口">
        <svg width="12" height="12" viewBox="0 0 12 12"><path d="M1 1l10 10M11 1L1 11" stroke="#808080" /></svg>
      </button>
    </DialogTitle>
    <Fields>
      {fields.map(([label, value, note], i) => (
        <React.Fragment key={label}>
          <FieldLabel htmlFor={`f${i}`}>{label}</FieldLabel>
          <FieldBox>
            <FieldInput id={`f${i}`} defaultValue={value} />
            {i < 2 && (
              <Spin type="button" aria-label="调整日期">
                <svg width="8" height="12" viewBox="0 0 8 12"><path d="M0 4L4 0L8 4ZM0 8H8L4 12Z" fill="#485c84" /></svg>
              </Spin>
            )}
          </FieldBox>
          {note && <Note>{note}</Note>}
        </React.Fragment>
      ))}
    </Fields>
    <CloseButton type="button">关闭</CloseButton>
  </Dialog>
);

const menus = ['系统', '页面', '分析', '新闻', '特色功能', '一德期货专栏', '交易', '工具', '帮助'];
const sideTabs = ['技术分析', '国内期货', '股指期货', '期权报价', '期权策略', '热点排名', '新闻资讯'];

export default function App() {
  return (
    <Screen>
      <GlobalStyle />
      <MenuBar>
        {menus.map((m) => <MenuItem key={m} $hot={m === '特色功能'}>{m}</MenuItem>)}
        <Title>博易大师—一德期货</Title>
        <TopButtons>
          <TradeButton>
            <svg width="12" height="14" viewBox="0 0 12 14"><path d="M8 0L1 8h4l-2 6 8-8H7l3-6z" fill="#f8a020" /></svg>
            交易
          </TradeButton>
          <TradeButton>
            <svg width="14" height="14" viewBox="0 0 14 14"><circle cx="7" cy="7" r="6" fill="#909090" /></svg>
            论坛
          </TradeButton>
          <WindowButton aria-label="最小化"><svg width="12" height="12" viewBox="0 0 12 12"><path d="M1 6.500h10v3H1z" fill="#fff" stroke="#999" /></svg></WindowButton>
          <WindowButton aria-label="最大化"><svg width="12" height="12" viewBox="0 0 12 12"><path d="M.5 1.500h11v9H.5zM3.500 4.500h5v3h-5z" fill="#fff" stroke="#999" /></svg></WindowButton>
          <WindowButton aria-label="退出"><svg width="12" height="12" viewBox="0 0 12 12"><path d="M1 1l10 10M11 1L1 11" stroke="#999" strokeWidth="3" /><path d="M1 1l10 10M11 1L1 11" stroke="#fff" /></svg></WindowButton>
        </TopButtons>
        <Watermark>5E天资5etz.com</Watermark>
      </MenuBar>

      <ToolBar>
        {tools.map((t) => (
          <React.Fragment key={t.name}>
            <Tool $on={t.on} aria-label={t.name}>{t.icon}</Tool>
            {t.split && <Divider />}
          </React.Fragment>
        ))}
      </ToolBar>

      <Body>
        <SideTabs>
          {sideTabs.map((t, i) => (
            <SideTab key={t} $on={i === 0}>
              {t.split('').map((ch, k) => <span key={k}>{ch}</span>)}
              {i === 0 && <svg width="4" height="12" viewBox="0 0 4 12"><path d="M0 2l4 4-4 4z" fill="#fff" /></svg>}
              <Slant width="15" height="10" viewBox="0 0 15 10"><path d="M0 0L15 9.500H0Z" fill="#d8d8d8" /><path d="M0 0L15 9.500H0" fill="none" stroke="#606060" /></Slant>
            </SideTab>
          ))}
        </SideTabs>

        <Charts>
          <ChartHead>
            <Instrument>{'螺纹2410(010610)<日线>'}</Instrument>
            <HeadLink href="#overlay">商品叠加</HeadLink>
            <HeadLink href="#options">查看期权</HeadLink>
            <HeadLink href="#period">周期</HeadLink>
            <HeadButton aria-label="向前"><svg width="14" height="13" viewBox="0 0 14 13"><path d="M1.500 6.500l4-4v2.500h7v3h-7v2.500z" fill="none" stroke={C.link} /></svg></HeadButton>
            <HeadButton aria-label="向后"><svg width="14" height="13" viewBox="0 0 14 13"><path d="M12.500 6.500l-4-4v2.500h-7v3h7v2.500z" fill="none" stroke={C.link} /></svg></HeadButton>
            <HeadButton aria-label="布局"><svg width="14" height="13" viewBox="0 0 14 13"><path d="M0 8.500h10M9.500 0v13M11 2.500h2M11 5.500h2M11 8.500h2" fill="none" stroke={C.link} /></svg></HeadButton>
          </ChartHead>

          <Panel $grow={532}>
            <PriceChart />
            <Legend $cols="16px 60px 67px 67px 67px 67px 67px 74px 78px 33px 37px 68px 57px 72px 81px 80px 72px 80px">
              <Entry $c={C.silver}>K</Entry>
              <Entry $c={C.white}>MA5:3704</Entry>
              <Entry $c={C.yellow}>MA13:3689</Entry>
              <Entry $c="#f000f0">MA21:3683</Entry>
              <Entry $c="#00f000">MA34:3636</Entry>
              <Entry $c="#7878e8">MA55:3640</Entry>
              <Entry $c="#f08000">MA89:3726</Entry>
              <Entry $c="#30a0e0">MA144:3776</Entry>
              <Entry $c="#d03050">MA233:3751</Entry>
              <Entry $c={C.silver}>SSLO</Entry>
              <Entry $c={C.silver}>3742</Entry>
              <Entry $c={C.silver}>BOLL(26,2)</Entry>
              <Entry $c={C.yellow}>MID:3672</Entry>
              <Entry $c="#f000f0">UPPER:3750</Entry>
              <Entry $c="#00f000">LOWER:3594</Entry>
              <Entry $c={C.silver}>SAR(10,2,20)</Entry>
              <Entry $c="#f00000">SARUP:3610</Entry>
              <Entry $c="#00f000">SARDOWN:0</Entry>
            </Legend>
          </Panel>
          <Panel $grow={145}>
            <VolumeChart />
            <Legend $cols="63px 136px 136px 136px">
              <Entry $c={C.silver}>VOL(5,13)</Entry>
              <Entry $c={C.silver}>VOLUME:1317680.0000</Entry>
              <Entry $c={C.white}>MAVOL1:1573938.6000</Entry>
              <Entry $c={C.yellow}>MAVOL2:1471367.5385</Entry>
            </Legend>
          </Panel>
          <Panel $grow={139}>
            <MacdChart />
            <Legend $cols="90px 78px 77px 84px">
              <Entry $c={C.silver}>MACD(5,21,13)</Entry>
              <Entry $c={C.white}>DIFF:38.1697</Entry>
              <Entry $c={C.yellow}>DEA:21.7822</Entry>
              <Entry $c={C.silver}>MACD:32.7750</Entry>
            </Legend>
          </Panel>
          <Panel $grow={119}>
            <CciChart />
            <Legend $cols="47px 60px">
              <Entry $c={C.silver}>CCI(55)</Entry>
              <Entry $c={C.white}>107.1537</Entry>
            </Legend>
          </Panel>
          <DateAxis>
            <svg viewBox="17 1003 1657 15" preserveAspectRatio="none" role="img" aria-label="月份">
              <path d="M78.5 1003V1018" stroke={C.line} />
              <text x="73" y="1015" fill={C.white} fontSize="12" textAnchor="end" fontFamily={UI}>日线</text>
              {months.map(([x, label]) => (
                <text key={x} x={x} y="1014" fill={C.white} fontSize="10" fontFamily={FIXED}>{label}</text>
              ))}
            </svg>
          </DateAxis>
        </Charts>

        <Quotes>
          <QuoteHead>
            <QuoteName>螺纹2410(rb2410)</QuoteName>
            <HeadButton aria-label="展开"><svg width="14" height="13" viewBox="0 0 14 13"><path d="M2.500 2.500h9v7h-9z" fill="none" stroke={C.link} /></svg></HeadButton>
          </QuoteHead>
          <Balance />
          <Depth rows={asks} />
          <Depth rows={bids} />
          <QuoteTable>
            <tbody>
              {stats.map(([a, av, ac, b, bv, bc]) => (
                <QRow key={a}>
                  <QLabel scope="row">{a}</QLabel>
                  <QNum $c={ac}>{av}</QNum>
                  <QLabel scope="row" $second>{b}</QLabel>
                  <QNum $c={bc} $last>{bv}</QNum>
                </QRow>
              ))}
            </tbody>
          </QuoteTable>
          <TickTable>
            <thead>
              <tr>
                <TickHead $w={41}>北京</TickHead>
                <TickHead $w={67}>价格</TickHead>
                <TickHead $w={48}>√大单</TickHead>
                <TickHead $w={48}>仓差</TickHead>
                <TickHead $w={35}>性质</TickHead>
              </tr>
            </thead>
            <tbody>
              {ticks.map(([time, price, lots, change, kind, dir], i) => (
                <tr key={i}>
                  <TickTime $full={time.length > 3}>{time}</TickTime>
                  <TickNum $c={R}>{price}</TickNum>
                  <TickNum $c={dir === 'g' ? G : R}>{lots}</TickNum>
                  <TickNum $c={Y}>{change}</TickNum>
                  <TickNum $c={dir === 'g' ? G : R} $plain>{kind}</TickNum>
                </tr>
              ))}
            </tbody>
          </TickTable>
          <QuoteTabs>
            <QuoteTab $on>笔</QuoteTab>
            <QuoteTab>权</QuoteTab>
            <TabRule />
          </QuoteTabs>
        </Quotes>
      </Body>

      <StatusBar>
        <Index $w={208}>沪<b>3157.97</b><b>-18.18</b><span>3485.84亿</span></Index>
        <Index $w={218}>深<b>9681.66</b><b>-62.18</b><span>4588.61亿</span></Index>
        <Index $w={220}>300<b>3676.16</b><b>-14.88</b><span>1895.75亿</span></Index>
        <Clock>
          <svg width="50" height="14" viewBox="0 0 50 14"><path d="M1 0h2v8H1z" fill="#e03030" /><path d="M24 1h10l-4 5v6h-2V6z" fill="none" stroke="#404040" strokeWidth="2" /><path d="M38 5h2v7h-2zM42 1h2v11h-2z" fill="#404040" /></svg>
          15:34
        </Clock>
      </StatusBar>

      <RangeDialog />
    </Screen>
  );
}
